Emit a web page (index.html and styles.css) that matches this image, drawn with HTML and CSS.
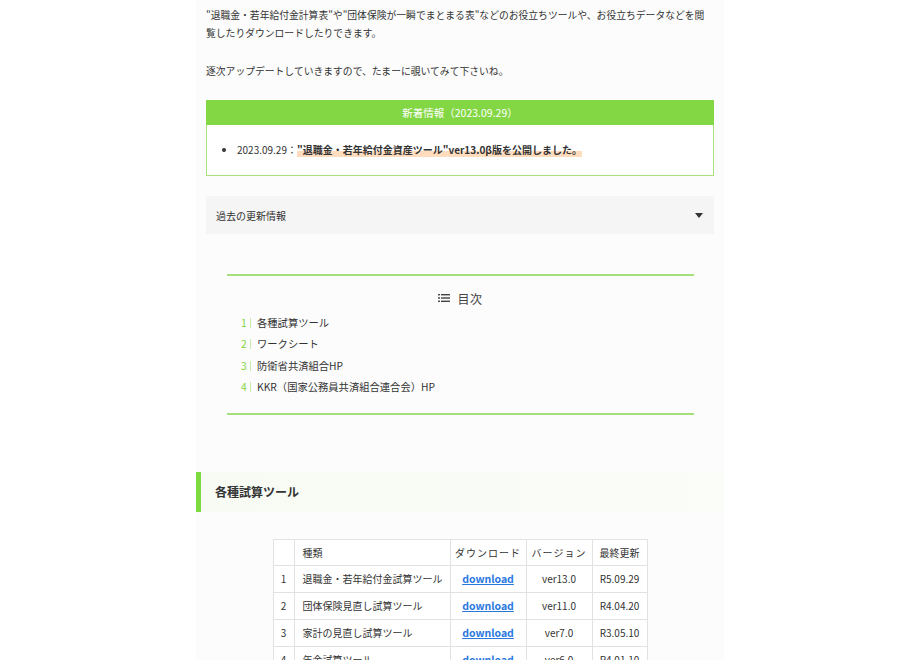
FILE: index.html
```html
<!DOCTYPE html>
<html lang="ja">
<head>
<meta charset="utf-8">
<title>お役立ちツール</title>
<link rel="stylesheet" href="styles.css">
</head>
<body>
<main class="main">
  <p class="lead">"退職金・若年給付金計算表"や"団体保険が一瞬でまとまる表"などのお役立ちツールや、お役立ちデータなどを閲覧したりダウンロードしたりできます。</p>
  <p class="lead">逐次アップデートしていきますので、たまーに覗いてみて下さいね。</p>

  <section class="news">
    <div class="news-head">新着情報（2023.09.29）</div>
    <ul class="news-list">
      <li>2023.09.29：<strong class="mark">"退職金・若年給付金資産ツール"ver13.0β版を公開しました。</strong></li>
    </ul>
  </section>

  <div class="accordion">
    <span>過去の更新情報</span>
    <span class="tri"></span>
  </div>

  <nav class="toc">
    <div class="toc-title">
      <svg class="toc-icon" width="12" height="10" viewBox="0 0 12 10" aria-hidden="true">
        <rect x="0" y="1" width="2" height="1.4" fill="#444"/>
        <rect x="3" y="1" width="9" height="1.4" fill="#444"/>
        <rect x="0" y="4.3" width="2" height="1.4" fill="#444"/>
        <rect x="3" y="4.3" width="9" height="1.4" fill="#444"/>
        <rect x="0" y="7.6" width="2" height="1.4" fill="#444"/>
        <rect x="3" y="7.6" width="9" height="1.4" fill="#444"/>
      </svg>
      <span>目次</span>
    </div>
    <ol class="toc-list">
      <li><span class="num">1</span><span class="bar"></span>各種試算ツール</li>
      <li><span class="num">2</span><span class="bar"></span>ワークシート</li>
      <li><span class="num">3</span><span class="bar"></span>防衛省共済組合HP</li>
      <li><span class="num">4</span><span class="bar"></span>KKR（国家公務員共済組合連合会）HP</li>
    </ol>
  </nav>

  <h2 class="sec-head">各種試算ツール</h2>

  <table class="tools">
    <colgroup>
      <col class="c-no"><col class="c-name"><col class="c-dl"><col class="c-ver"><col class="c-date">
    </colgroup>
    <thead>
      <tr><th></th><th class="left">種類</th><th class="spaced">ダウンロード</th><th class="spaced">バージョン</th><th>最終更新</th></tr>
    </thead>
    <tbody>
      <tr><td>1</td><td class="left">退職金・若年給付金試算ツール</td><td><a href="#">download</a></td><td>ver13.0</td><td>R5.09.29</td></tr>
      <tr><td>2</td><td class="left">団体保険見直し試算ツール</td><td><a href="#">download</a></td><td>ver11.0</td><td>R4.04.20</td></tr>
      <tr><td>3</td><td class="left">家計の見直し試算ツール</td><td><a href="#">download</a></td><td>ver7.0</td><td>R3.05.10</td></tr>
      <tr><td>4</td><td class="left">年金試算ツール</td><td><a href="#">download</a></td><td>ver6.0</td><td>R4.01.10</td></tr>
    </tbody>
  </table>
</main>
</body>
</html>
```
FILE: styles.css
```css
html, body {
  margin: 0;
  padding: 0;
  background: #ffffff;
}
body {
  font-family: "Noto Sans CJK JP", "Noto Sans", sans-serif;
  color: #333;
  font-size: 10px;
}
.main {
  width: 528px;
  box-sizing: border-box;
  margin-left: 196px;
  padding: 6px 10px 40px;
  background: #fcfcfc;
  min-height: 700px;
}
.lead {
  margin: 0 0 20px;
  line-height: 18px;
  font-size: 9.8px;
}
.news {
  border: 1px solid #a8e07c;
  background: #fff;
}
.news-head {
  margin: -1px -1px 0;
  height: 25px;
  line-height: 25px;
  background: #84d744;
  color: #fff;
  text-align: center;
  font-size: 10.5px;
}
.news-list {
  margin: 0;
  padding: 16px 0 16px 30px;
  line-height: 18px;
  font-size: 10px;
}
.mark {
  font-weight: 700;
  background: linear-gradient(transparent 62%, #ffdcbd 62%);
}
.accordion {
  margin-top: 20px;
  height: 38px;
  padding: 0 11px 0 10px;
  background: #f5f5f5;
  display: flex;
  align-items: center;
  justify-content: space-between;
  font-size: 10px;
}
.tri {
  width: 0;
  height: 0;
  border-left: 4.5px solid transparent;
  border-right: 4.5px solid transparent;
  border-top: 5px solid #333;
}
.toc {
  margin: 40px 20px 0 21px;
  border-top: 2px solid #a5e07a;
  border-bottom: 2px solid #a5e07a;
  padding: 12px 0 15px;
}
.toc-title {
  display: flex;
  align-items: center;
  justify-content: center;
  gap: 7px;
  height: 20px;
  font-size: 12px;
  color: #444;
  margin-bottom: 4px;
  letter-spacing: 0.5px;
}
.toc-icon {
  display: block;
}
.toc-list {
  list-style: none;
  margin: 0;
  padding: 0 0 0 14px;
  font-size: 10.3px;
  line-height: 21.4px;
}
.toc-list li {
  display: flex;
  align-items: center;
}
.num {
  color: #7fd63e;
  width: 8px;
}
.bar {
  display: inline-block;
  width: 1px;
  height: 10px;
  background: #c4ecab;
  margin: 0 6px 0 1px;
}
.sec-head {
  margin: 57px -10px 0;
  height: 40px;
  line-height: 40px;
  border-left: 5px solid #7ed940;
  padding-left: 14px;
  font-size: 12px;
  font-weight: 700;
  color: #333;
  background: linear-gradient(90deg, #f7fbf3, #f9fcf6 60%, #fbfdf9);
}
.tools {
  margin: 27px auto 0;
  border-collapse: collapse;
  background: #fff;
  font-size: 10px;
  width: 374px;
  table-layout: fixed;
}
.c-no { width: 21px; }
.c-name { width: 156px; }
.c-dl { width: 76px; }
.c-ver { width: 66px; }
.c-date { width: 55px; }
.tools th, .tools td {
  border: 1px solid #e2e2e2;
  text-align: center;
  padding: 0 4px;
  white-space: nowrap;
  font-weight: 400;
  overflow: hidden;
}
.tools th {
  height: 25px;
}
.tools td {
  height: 26px;
}
.tools .left {
  text-align: left;
  padding-left: 8px;
}
.spaced {
  letter-spacing: 1px;
}
.tools a {
  color: #2a78df;
  font-weight: 700;
  text-decoration: underline;
  font-size: 10.5px;
}
```
